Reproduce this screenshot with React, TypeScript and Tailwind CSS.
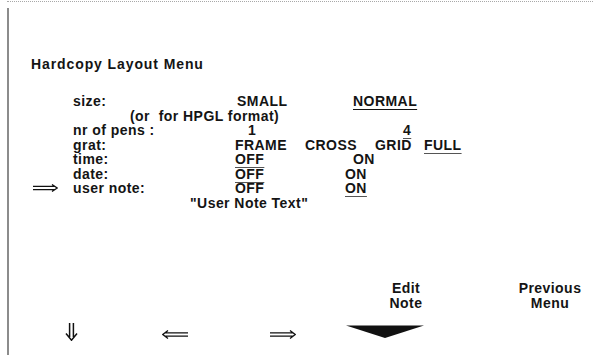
import React from "react";

const DoubleRight = ({ w = 26, h = 9 }: { w?: number; h?: number }) => (
  <svg width={w} height={h} viewBox={`0 0 ${w} ${h}`} fill="none" stroke="#111" strokeWidth="1.3">
    <path d={`M0 ${h / 2 - 1.7}H${w - 3} M0 ${h / 2 + 1.7}H${w - 3} M${w - 6} 0.5 L${w - 0.8} ${h / 2} L${w - 6} ${h - 0.5}`} />
  </svg>
);

const DoubleLeft = ({ w = 26, h = 9 }: { w?: number; h?: number }) => (
  <svg width={w} height={h} viewBox={`0 0 ${w} ${h}`} fill="none" stroke="#111" strokeWidth="1.3">
    <path d={`M3 ${h / 2 - 1.7}H${w} M3 ${h / 2 + 1.7}H${w} M6 0.5 L0.8 ${h / 2} L6 ${h - 0.5}`} />
  </svg>
);

const DoubleDown = () => (
  <svg width="13" height="18" viewBox="0 0 13 18" fill="none" stroke="#111" strokeWidth="1.5">
    <path d="M4.6 0V14 M8.4 0V14 M1 10.5 L6.5 17.2 L12 10.5" />
  </svg>
);

const Triangle = () => (
  <svg width="78" height="13" viewBox="0 0 78 13">
    <polygon points="0,0.5 78,0.5 39,13" fill="#111" />
  </svg>
);

export default function App() {
  const sel = "underline underline-offset-[3px] decoration-[1px] decoration-[#555]";
  return (
    <div className="w-[593px] h-[355px] bg-white overflow-hidden flex flex-col font-['Liberation_Sans',Arial,sans-serif] font-bold text-[#141414] text-[14px] tracking-[0.45px]">
      <div className="h-0 mt-[1px] ml-[7px] border-t border-dotted border-[#a8a8a8]" />
      <div className="flex-1 ml-[7px] mt-[6px] border-l-2 border-[#8c8c8c] flex flex-col">
        <div className="pl-[22px] mt-[49px] leading-[14px] tracking-[0.9px]">Hardcopy Layout Menu</div>

        <div className="mt-[23px] flex flex-col leading-[14.5px]">
          <div className="flex pl-[64px]">
            <div className="w-[164px]">size:</div>
            <div className="w-[116px]">SMALL</div>
            <div className="underline underline-offset-[3px] decoration-[1px]">NORMAL</div>
          </div>
          <div className="pl-[121px] whitespace-pre">(or  for HPGL format)</div>
          <div className="flex pl-[64px]">
            <div className="w-[175px]">nr of pens :</div>
            <div className="w-[155px]">1</div>
            <div className={sel}>4</div>
          </div>
          <div className="flex pl-[64px]">
            <div className="w-[162px]">grat:</div>
            <div className="w-[70px]">FRAME</div>
            <div className="w-[70px]">CROSS</div>
            <div className="w-[49px]">GRID</div>
            <div className={sel}>FULL</div>
          </div>
          <div className="flex pl-[64px]">
            <div className="w-[162px]">time:</div>
            <div className="w-[118px]"><span className={sel}>OFF</span></div>
            <div>ON</div>
          </div>
          <div className="flex pl-[64px]">
            <div className="w-[162px]">date:</div>
            <div className="w-[110px]"><span className={sel}>OFF</span></div>
            <div>ON</div>
          </div>
          <div className="flex items-center pl-[24px]">
            <div className="w-[40px] flex items-center">
              <DoubleRight w={25} h={8} />
            </div>
            <div className="w-[162px]">user note:</div>
            <div className="w-[110px]">OFF</div>
            <div className={sel}>ON</div>
          </div>
          <div className="pl-[181px]">"User Note Text"</div>
        </div>

        <div className="mt-[71px] flex">
          <div className="ml-[56px] mt-[42px]">
            <DoubleDown />
          </div>
          <div className="ml-[84px] mt-[49px]">
            <DoubleLeft />
          </div>
          <div className="ml-[82px] mt-[49px]">
            <DoubleRight />
          </div>
          <div className="ml-[50px] w-[78px] flex flex-col">
            <div className="ml-[43px] w-[34px] text-center leading-[15px]">
              <div>Edit</div>
              <div>Note</div>
            </div>
            <div className="mt-[14px]">
              <Triangle />
            </div>
          </div>
          <div className="ml-[92px] w-[68px] text-center leading-[15px]">
            <div>Previous</div>
            <div>Menu</div>
          </div>
        </div>
      </div>
    </div>
  );
}
